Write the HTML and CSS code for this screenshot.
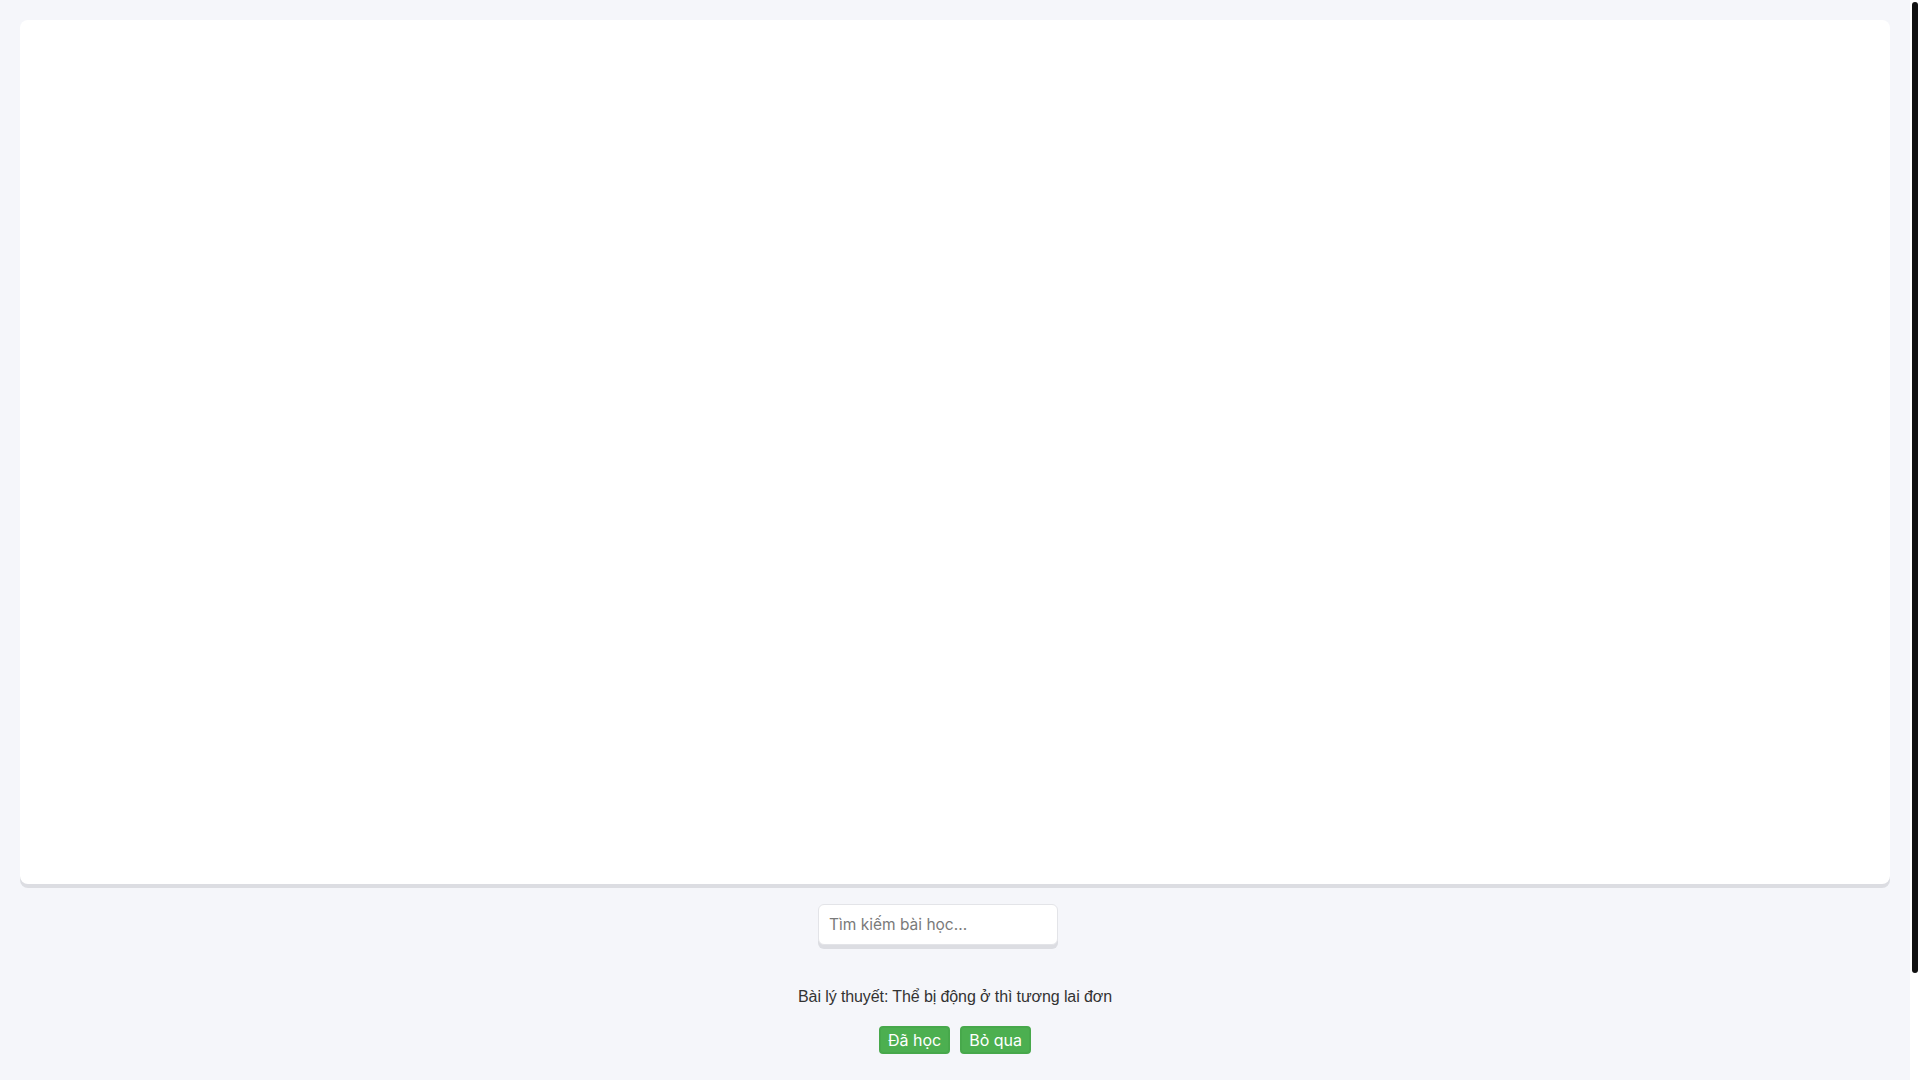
FILE: index.html
```html
<!DOCTYPE html>
<html lang="vi">
<head>
<meta charset="utf-8">
<title>Bài học</title>
<link rel="stylesheet" href="styles.css">
</head>
<body>
<div class="viewport">
  <main class="page">
    <div class="card"></div>
    <div class="search-row">
      <input class="search" type="text" placeholder="Tìm kiếm bài học...">
    </div>
    <p class="lesson">Bài lý thuyết: Thể bị động ở thì tương lai đơn</p>
    <div class="actions">
      <button class="btn">Đã học</button>
      <button class="btn">Bỏ qua</button>
    </div>
  </main>
  <div class="scrollbar"><div class="thumb"></div></div>
</div>
</body>
</html>
```
FILE: styles.css
```css
html, body { height: 100%; }
body {
  margin: 0;
  background: #f5f6fa;
  font-family: Inter, "Noto Sans", sans-serif;
  overflow: hidden;
}
.viewport {
  display: flex;
  height: 100vh;
}
.page {
  flex: 1;
  min-width: 0;
  padding: 20px 20px 140px;
  overflow: hidden;
}
.scrollbar {
  flex: 0 0 10px;
  background: #ffffff;
  padding: 2px 2px 0;
  box-sizing: border-box;
}
.thumb {
  height: 971px;
  background: #111111;
  border-radius: 3px;
}
.card {
  height: 864px;
  background: #ffffff;
  border-radius: 8px;
  box-shadow: 0 4px 0 #dcdde2;
}
.search-row {
  display: flex;
  justify-content: center;
  margin-top: 20px;
}
.search {
  box-sizing: border-box;
  width: 240px;
  height: 41px;
  margin-right: 34px;
  padding: 0 10px;
  border: 1px solid #e3e4e8;
  border-radius: 6px;
  background: #ffffff;
  box-shadow: 0 4px 0 #dcdde2;
  font-family: Inter, sans-serif;
  font-size: 15.5px;
  color: #333;
  outline: none;
}
.search::placeholder { color: #7a7a7a; }
.lesson {
  margin: 43px 0 0;
  text-align: center;
  font-family: "Liberation Sans", Arial, sans-serif;
  font-size: 16px;
  letter-spacing: -0.1px;
  color: #333333;
}
.actions {
  display: flex;
  justify-content: center;
  gap: 10px;
  margin-top: 20px;
}
.btn {
  box-sizing: border-box;
  height: 28px;
  padding: 0 7px;
  border: 2px solid #47a84b;
  border-radius: 4px;
  background: #4caf50;
  color: #ffffff;
  font-family: Inter, sans-serif;
  font-size: 16px;
  line-height: 1;
}
```
